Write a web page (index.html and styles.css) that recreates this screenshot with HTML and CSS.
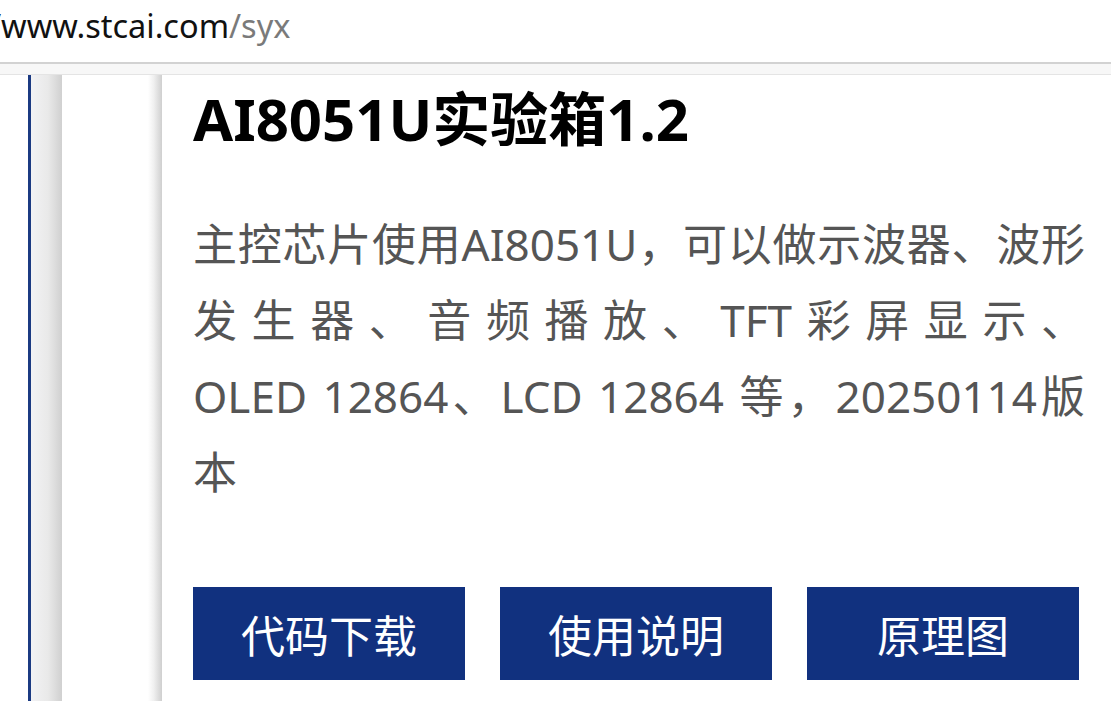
FILE: index.html
```html
<!DOCTYPE html>
<html lang="zh-CN">
<head>
<meta charset="utf-8">
<title>AI8051U实验箱1.2</title>
<link rel="stylesheet" href="styles.css">
</head>
<body>
<div class="topbar">
  <div class="url"><span class="host">/www.stcai.com</span><span class="path">/syx</span></div>
</div>
<div class="tabstrip"></div>
<div class="main">
  <div class="rail"></div>
  <div class="shade-a"></div>
  <div class="gutter"></div>
  <div class="shade-b"></div>
  <div class="card">
    <h1 class="title">AI8051U实验箱1.2</h1>
    <p class="desc">主控芯片使用AI8051U，可以做示波器、波形发生器、音频播放、TFT彩屏显示、 OLED&nbsp;12864、LCD&nbsp;12864 等，20250114版本</p>
    <div class="actions">
      <a class="btn" href="#">代码下载</a>
      <a class="btn" href="#">使用说明</a>
      <a class="btn" href="#">原理图</a>
    </div>
  </div>
</div>
</body>
</html>
```
FILE: styles.css
```css
html, body {
  margin: 0;
  padding: 0;
  background: #ffffff;
  overflow: hidden;
}
body {
  width: 1111px;
  height: 701px;
  font-family: "Noto Sans", "Noto Sans CJK SC", sans-serif;
}
.topbar {
  height: 62px;
  background: #ffffff;
  border-bottom: 2px solid #d2d2d2;
  display: flex;
  align-items: center;
  overflow: hidden;
}
.url {
  margin-left: -11px;
  margin-top: -11px;
  font-size: 32.5px;
  white-space: nowrap;
}
.host { color: #111111; }
.path { color: #7a7a7a; }
.tabstrip {
  height: 10px;
  background: #f7f7f7;
  border-bottom: 1px solid #e4e4e4;
}
.main {
  display: flex;
  height: 626px;
}
.rail {
  width: 3px;
  margin-left: 28px;
  background: #1b3a82;
  flex: none;
}
.shade-a {
  width: 31px;
  flex: none;
  background: linear-gradient(to right, #f2f2f4, #e9e9e9 55%, #d0d0d0);
}
.gutter {
  width: 86px;
  flex: none;
  background: #ffffff;
}
.shade-b {
  width: 14px;
  flex: none;
  background: linear-gradient(to right, #ffffff, #f0f0f0 40%, #cfcfcf);
}
.card {
  flex: 1;
  min-width: 0;
  padding: 8px 0 0 31px;
  background: #ffffff;
}
.title {
  margin: 0;
  font-size: 58px;
  line-height: 72px;
  font-weight: 700;
  color: #000000;
}
.desc {
  width: 892px;
  margin: 51px 0 0;
  font-size: 44px;
  line-height: 76px;
  color: #555555;
  text-align: justify;
}
.actions {
  display: flex;
  gap: 35px;
  margin-top: 77px;
}
.btn {
  width: 272px;
  height: 93px;
  display: flex;
  align-items: center;
  justify-content: center;
  background: #11317f;
  color: #ffffff;
  font-size: 44px;
  text-decoration: none;
}
```
